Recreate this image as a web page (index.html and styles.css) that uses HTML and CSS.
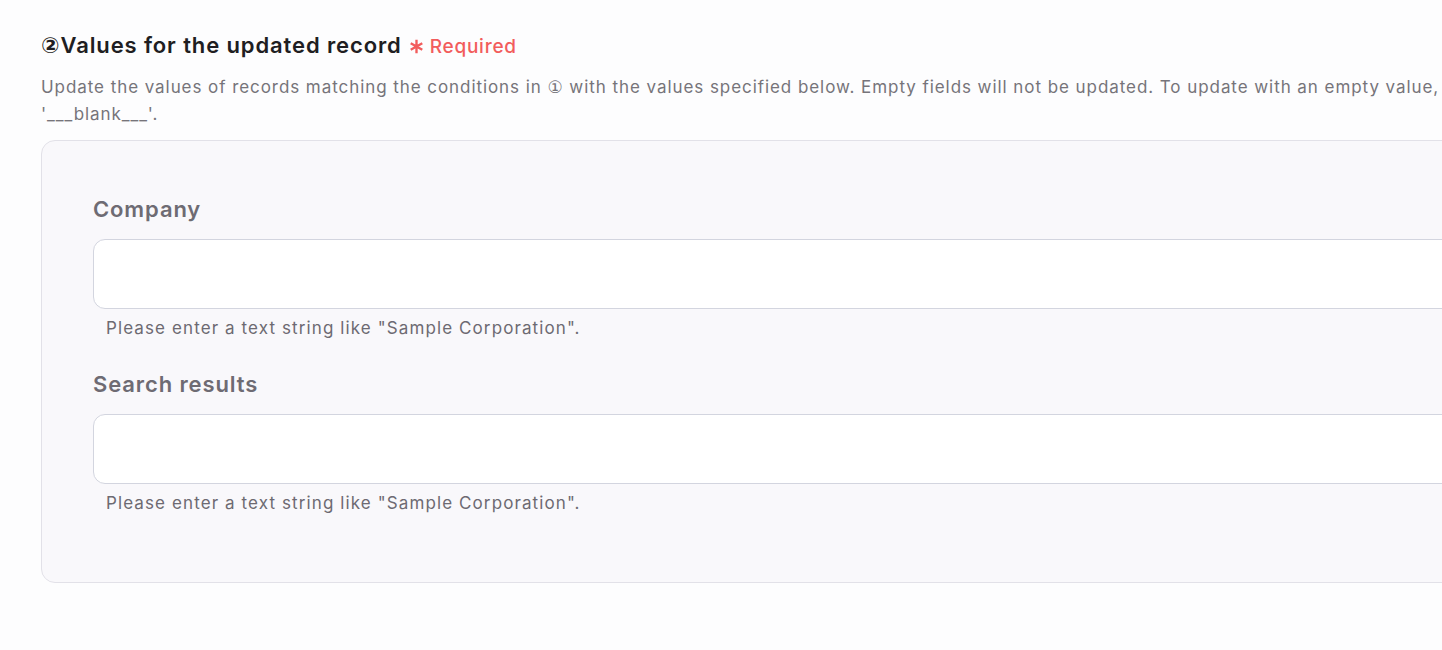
FILE: index.html
```html
<!DOCTYPE html>
<html lang="en">
<head>
    <meta charset="UTF-8">
    <meta name="viewport" content="width=device-width, initial-scale=1.0">
    <title>Update record</title>
    <link rel="stylesheet" href="styles.css">
</head>
<body>
    <div class="section">
        <h2 class="section-title">
            <span class="circled">②</span>Values for the updated record
            <span class="required">
                <svg class="required-mark" width="15" height="15" viewBox="0 0 14 14"><path d="M7 0.8v12.4M1.6 3.9l10.8 6.2M1.6 10.1l10.8-6.2" stroke="#f25c5c" stroke-width="2.2" fill="none"/></svg>Required
            </span>
        </h2>
        <p class="section-desc">Update the values of records matching the conditions in <span class="circled">①</span> with the values specified below. Empty fields will not be updated. To update with an empty value, please enter '___blank___'.</p>
        <div class="field-panel">
            <div class="field">
                <label class="field-label">Company</label>
                <input class="field-input" type="text">
                <div class="field-help">Please enter a text string like "Sample Corporation".</div>
            </div>
            <div class="field">
                <label class="field-label">Search results</label>
                <input class="field-input" type="text">
                <div class="field-help">Please enter a text string like "Sample Corporation".</div>
            </div>
        </div>
    </div>
</body>
</html>
```

FILE: styles.css
```css
body {
    margin: 0;
    background-color: #fdfdfe;
    font-family: Inter, "Noto Sans", sans-serif;
    overflow: hidden;
}

.section {
    width: 1560px;
    padding: 31px 0 0 41px;
}

.circled {
    font-family: "DejaVu Sans", sans-serif;
}

.section-title {
    margin: 0;
    font-size: 22px;
    line-height: 28px;
    font-weight: 600;
    color: #1f1e22;
    letter-spacing: 0.04em;
    display: flex;
    align-items: baseline;
}

.required {
    margin-left: 7px;
    font-size: 19px;
    font-weight: 500;
    color: #f25c5c;
    letter-spacing: 0.04em;
}

.required-mark {
    margin-right: 6px;
    vertical-align: -1px;
}

.section-desc {
    margin: 13px 0 12px;
    font-size: 17px;
    line-height: 27px;
    color: #76747a;
    letter-spacing: 0.055em;
}

.field-panel {
    background-color: #f9f8fb;
    border: 1px solid #e2e1e8;
    border-radius: 14px;
    padding: 54px 51px 68px;
}

.field {
    margin-bottom: 31px;
}

.field:last-child {
    margin-bottom: 0;
}

.field-label {
    display: block;
    font-size: 22px;
    line-height: 28px;
    font-weight: 600;
    color: #6e6b73;
    letter-spacing: 0.04em;
    margin-bottom: 16px;
}

.field-input {
    display: block;
    box-sizing: border-box;
    width: 100%;
    height: 70px;
    border: 1px solid #d3d5df;
    border-radius: 12px;
    background-color: #ffffff;
}

.field-help {
    margin-top: 8px;
    padding-left: 13px;
    font-size: 17px;
    line-height: 22px;
    color: #6d6a72;
    letter-spacing: 0.065em;
}
```
